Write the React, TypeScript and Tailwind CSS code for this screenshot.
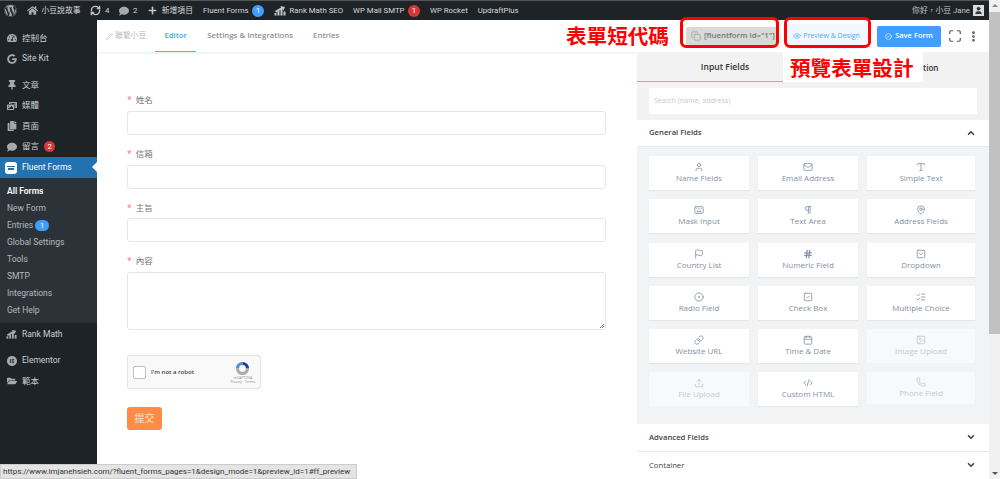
import { ReactNode } from "react";
import {
  Calendar,
  ChevronDown,
  ChevronUp,
  CircleCheck,
  CircleDot,
  CodeXml,
  Copy,
  Eye,
  Flag,
  Hash,
  Image,
  Keyboard,
  Link,
  ListChecks,
  Mail,
  MapPin,
  Maximize,
  MoreVertical,
  Pencil,
  Phone,
  Pilcrow,
  Plus,
  RefreshCw,
  SquareCheck,
  SquareChevronDown,
  Type,
  Upload,
  User,
} from "lucide-react";
import {
  FaComment,
  FaCopy,
  FaFolderOpen,
  FaGoogle,
  FaHome,
  FaPhotoVideo,
  FaTachometerAlt,
  FaThumbtack,
  FaWordpress,
} from "react-icons/fa";
import { SiElementor } from "react-icons/si";

const FONT = "font-['Open_Sans','Noto_Sans_CJK_TC',sans-serif]";
const WP_FONT = "font-['Roboto','Noto_Sans_CJK_TC',sans-serif]";

const RankMathIcon = ({ size = 12 }: { size?: number }) => (
  <svg width={size} height={size} viewBox="0 0 24 24" fill="currentColor">
    <rect x="1" y="16" width="4" height="5" />
    <rect x="7" y="12" width="4" height="9" />
    <rect x="13" y="8" width="4" height="13" />
    <path d="M2 12 L14 5 L13 2 L22 4 L19 11 L17 8 L4 15 Z" />
    <rect x="19" y="13" width="4" height="8" />
  </svg>
);

const TopItem = ({ icon, label, badge, badgeColor }: { icon?: ReactNode; label: string; badge?: string; badgeColor?: string }) => (
  <div className="flex items-center gap-[3.5px] whitespace-nowrap">
    {icon}
    <span>{label}</span>
    {badge && (
      <span className={`flex h-[12px] w-[12px] items-center justify-center rounded-full text-[8px] text-white ${badgeColor}`}>{badge}</span>
    )}
  </div>
);

const TopBar = () => (
  <div className={`flex h-[20px] shrink-0 items-center justify-between border-t border-[#555] bg-[#1d2327] pl-[4px] pr-[5px] text-[7.8px] text-[#d5d8da] ${WP_FONT}`}>
    <div className="flex items-center gap-[10px]">
      <FaWordpress size={13} className="text-[#a7aaad]" />
      <TopItem icon={<FaHome size={11} className="text-[#a7aaad]" />} label="小豆說故事" />
      <TopItem icon={<RefreshCw size={11} strokeWidth={3} className="text-[#c3c4c7]" />} label="4" />
      <TopItem icon={<FaComment size={10} className="text-[#a7aaad]" />} label="2" />
      <TopItem icon={<Plus size={11} strokeWidth={3.5} className="text-[#c3c4c7]" />} label="新增項目" />
      <TopItem label="Fluent Forms" badge="1" badgeColor="bg-[#409eff]" />
      <TopItem icon={<span className="text-[#c3c4c7]"><RankMathIcon /></span>} label="Rank Math SEO" />
      <TopItem label="WP Mail SMTP" badge="1" badgeColor="bg-[#d63638]" />
      <TopItem label="WP Rocket" />
      <TopItem label="UpdraftPlus" />
    </div>
    <div className="flex items-center gap-[3px] text-[#c3c4c7]">
      <span>你好，小豆 Jane</span>
      <div className="flex h-[11px] w-[11px] items-center justify-center bg-[#ddd]">
        <User size={9} className="fill-[#333] text-[#333]" />
      </div>
    </div>
  </div>
);

const MenuItem = ({ icon, label, badge }: { icon: ReactNode; label: string; badge?: string }) => (
  <div className="flex h-[20.5px] items-center gap-[5px] pl-[6px] text-[8.5px] text-[#c9ced2]">
    <span className="flex w-[11px] justify-center text-[#a7aaad]">{icon}</span>
    <span>{label}</span>
    {badge && <span className="flex h-[11px] w-[11px] items-center justify-center rounded-full bg-[#d63638] text-[7.5px] text-white">{badge}</span>}
  </div>
);

const SUB_ITEMS = ["New Form", "Entries", "Global Settings", "Tools", "SMTP", "Integrations", "Get Help"];

const Sidebar = () => (
  <div className={`flex w-[97px] shrink-0 flex-col bg-[#1d2327] pt-[8px] ${WP_FONT}`}>
    <MenuItem icon={<FaTachometerAlt size={10} />} label="控制台" />
    <MenuItem icon={<FaGoogle size={10} />} label="Site Kit" />
    <div className="h-[6px]" />
    <MenuItem icon={<FaThumbtack size={10} />} label="文章" />
    <MenuItem icon={<FaPhotoVideo size={10} />} label="媒體" />
    <MenuItem icon={<FaCopy size={10} />} label="頁面" />
    <MenuItem icon={<FaComment size={10} />} label="留言" badge="2" />
    <div className="relative flex h-[21px] items-center gap-[5px] bg-[#2271b1] pl-[5px] text-[8.5px] text-white">
      <span className="flex h-[12px] w-[12px] flex-col items-center justify-center gap-[1px] rounded-[3px] bg-white">
        <span className="h-[1.5px] w-[8px] bg-[#2271b1]" />
        <span className="h-[1.5px] w-[6px] bg-[#2271b1]" />
      </span>
      <span>Fluent Forms</span>
      <span className="absolute right-0 top-[5px] h-0 w-0 border-y-[5px] border-r-[5px] border-y-transparent border-r-white" />
    </div>
    <div className="flex h-[145px] flex-col bg-[#2c3338] pt-[5px] text-[8.5px] text-[#b4b9be]">
      <div className="flex h-[17px] items-center pl-[7px] font-semibold text-white">All Forms</div>
      {SUB_ITEMS.map((item) => (
        <div key={item} className="flex h-[17px] items-center gap-[2px] pl-[7px]">
          {item}
          {item === "Entries" && (
            <span className="flex h-[11px] w-[14px] items-center justify-center rounded-full bg-[#409eff] text-[7.5px] text-white">1</span>
          )}
        </div>
      ))}
    </div>
    <div className="h-[1px]" />
    <MenuItem icon={<RankMathIcon size={11} />} label="Rank Math" />
    <div className="h-[6px]" />
    <MenuItem icon={<SiElementor size={10} />} label="Elementor" />
    <MenuItem icon={<FaFolderOpen size={10} />} label="範本" />
  </div>
);

const Header = () => (
  <div className="relative z-10 flex h-[34px] shrink-0 items-center justify-between border-b-2 border-[#f3f4f5] bg-white pl-[9px] pr-[9px]">
    <div className="flex h-full items-center text-[7.8px] font-semibold text-[#8c9196]">
      <div className="flex items-center gap-[2px] pr-[9px] font-normal text-[#bbb]">
        <Pencil size={7} />
        <span>聯繫小豆</span>
      </div>
      <div className="flex h-full w-[41px] items-center justify-center border-b border-[#5aa9f5] text-[#4a9ff5]">Editor</div>
      <div className="pl-[11px] pr-[20px]">Settings &amp; Integrations</div>
      <div>Entries</div>
    </div>
    <div className="flex items-center">
      <div className="flex h-[18px] w-[91px] items-center gap-[3px] overflow-hidden rounded-[2px] bg-[#d9d9d9] pl-[5px] text-[7.8px] font-semibold text-[#777]">
        <Copy size={10} className="shrink-0 text-[#a5a5a5]" />
        <span className="whitespace-nowrap">[fluentform id="1"]</span>
      </div>
      <div className="ml-[9px] flex h-[25px] w-[81px] items-center justify-center gap-[2px] bg-[#f0f7ff] text-[7px] text-[#5aa9f5]">
        <Eye size={8} />
        <span>Preview &amp; Design</span>
      </div>
      <div className="ml-[10px] flex h-[21px] w-[64px] items-center justify-center gap-[3px] rounded-[2px] bg-[#409eff] text-[7.5px] font-semibold text-white">
        <CircleCheck size={7} />
        <span>Save Form</span>
      </div>
      <Maximize size={14} className="ml-[7px] text-[#555]" />
      <MoreVertical size={13} strokeWidth={3} className="ml-[5px] text-[#555]" />
    </div>

    {/* red notes drawn over the screenshot */}
    <span className="absolute left-[469px] top-[2px] text-[20.6px] font-bold leading-[28px] text-[#f00]">表單短代碼</span>
    <span className="absolute left-[583px] top-[-3px] h-[31px] w-[99px] rounded-[6px] border-[3px] border-[#f00]" />
    <span className="absolute left-[687px] top-[-3px] h-[31px] w-[87px] rounded-[6px] border-[3px] border-[#f00]" />
    <div className="absolute left-[686px] top-[32px] h-[30px] w-[140px] bg-white pl-[7px] pt-[2px] text-[20.6px] font-bold leading-[28px] text-[#f00]">預覽表單設計</div>
  </div>
);

const Field = ({ label, tall }: { label: string; tall?: boolean }) => (
  <div className="mb-[12.7px]">
    <div className="mb-[4px] flex h-[13px] items-center gap-[4px] text-[8.5px] text-[#777]">
      <span className="text-[#f56c6c]">*</span>
      <span>{label}</span>
    </div>
    <div className={`${tall ? "h-[58px]" : "h-[24px]"} relative rounded-[3px] border border-[#e4e6e8] bg-white`}>
      {tall && <span className="absolute bottom-[1px] right-[1px] h-[5px] w-[5px] bg-[linear-gradient(135deg,transparent_50%,#777_50%,#777_60%,transparent_60%,transparent_75%,#777_75%,#777_85%,transparent_85%)]" />}
    </div>
  </div>
);

const RecaptchaLogo = () => (
  <svg width="15" height="15" viewBox="0 0 24 24" fill="none" strokeWidth="5">
    <path d="M4 12 A8 8 0 0 1 12 4" stroke="#4a90e2" />
    <path d="M12 4 A8 8 0 0 1 20 12" stroke="#1c3aa9" />
    <path d="M20 12 A8 8 0 0 1 4 12" stroke="#ababab" />
  </svg>
);

const FormCanvas = () => (
  <div className="w-[540px] shrink-0 bg-white pl-[30px] pr-[31px] pt-[40px]">
    <Field label="姓名" />
    <Field label="信箱" />
    <Field label="主旨" />
    <Field label="內容" tall />
    <div className="mt-[25px] flex h-[34px] w-[134px] items-center rounded-[2px] border border-[#e4e4e4] bg-[#f9f9f9] pl-[5px] pr-[5px]">
      <span className="h-[13px] w-[13px] rounded-[2px] border border-[#c1c1c1] bg-white" />
      <span className="ml-[5px] text-[6px] font-semibold text-[#444]">I'm not a robot</span>
      <div className="ml-auto flex flex-col items-center text-[3.5px] leading-[4px] text-[#888]">
        <RecaptchaLogo />
        <span>reCAPTCHA</span>
        <span>Privacy · Terms</span>
      </div>
    </div>
    <div className="mt-[18px] flex h-[23px] w-[35px] items-center justify-center rounded-[3px] bg-[#ff8c42] text-[10px] text-[#ffe3d0]">提交</div>
  </div>
);

const FIELDS: { label: string; icon: ReactNode; off?: boolean; short?: boolean }[] = [
  { label: "Name Fields", icon: <User size={10} /> },
  { label: "Email Address", icon: <Mail size={10} /> },
  { label: "Simple Text", icon: <Type size={10} /> },
  { label: "Mask Input", icon: <Keyboard size={10} /> },
  { label: "Text Area", icon: <Pilcrow size={10} /> },
  { label: "Address Fields", icon: <MapPin size={10} /> },
  { label: "Country List", icon: <Flag size={10} /> },
  { label: "Numeric Field", icon: <Hash size={10} strokeWidth={3} /> },
  { label: "Dropdown", icon: <SquareChevronDown size={10} /> },
  { label: "Radio Field", icon: <CircleDot size={10} /> },
  { label: "Check Box", icon: <SquareCheck size={10} /> },
  { label: "Multiple Choice", icon: <ListChecks size={10} /> },
  { label: "Website URL", icon: <Link size={10} /> },
  { label: "Time & Date", icon: <Calendar size={10} /> },
  { label: "Image Upload", icon: <Image size={10} />, off: true },
  { label: "File Upload", icon: <Upload size={10} />, off: true },
  { label: "Custom HTML", icon: <CodeXml size={10} /> },
  { label: "Phone Field", icon: <Phone size={10} />, off: true, short: true },
];

const FieldCard = ({ label, icon, off, short }: { label: string; icon: ReactNode; off?: boolean; short?: boolean }) => (
  <div
    className={`flex flex-col items-center justify-center text-[8px] leading-[12px] ${short ? "h-[32px]" : "h-[34px]"} ${
      off ? "bg-[#f8f9fa] text-[#c5c9ce]" : "bg-white text-[#8491a5] shadow-[0_1px_1px_rgba(0,0,0,0.05)]"
    }`}
  >
    {icon}
    <span>{label}</span>
  </div>
);

const Accordion = ({ label, open, bold }: { label: string; open?: boolean; bold?: boolean }) => (
  <div className={`flex shrink-0 items-center justify-between border-b border-[#e8eaec] bg-white pl-[12px] pr-[13px] text-[7.7px] text-[#444] ${open ? "h-[27px]" : "h-[28px]"} ${bold ? "font-semibold" : ""}`}>
    <span>{label}</span>
    {open ? <ChevronUp size={10} strokeWidth={4} /> : <ChevronDown size={10} strokeWidth={4} />}
  </div>
);

const FieldsPanel = () => (
  <div className="flex min-w-0 flex-1 flex-col bg-[#f1f3f5]">
    <div className="flex h-[28px] shrink-0 bg-[#f2f2f2] text-[8.6px] font-semibold text-[#333]">
      <div className="flex w-[146px] items-center justify-center border-b-[1.5px] border-[#7cb9f5] pl-[30px]">Input Fields</div>
      <div className="flex flex-1 items-center pl-[140px] text-[8px]">tion</div>
    </div>
    <div className="shrink-0 bg-[#f2f2f2] px-[12px] pb-[6px] pt-[6px]">
      <div className="flex h-[26px] items-center bg-white pl-[5px] text-[7px] text-[#c5c9ce]">Search (name, address)</div>
    </div>
    <Accordion label="General Fields" open bold />
    <div className="grid shrink-0 grid-cols-[100px_100px_108px] gap-x-[9px] gap-y-[9.3px] px-[12px] pb-[17.5px] pt-[9px]">
      {FIELDS.map((field) => (
        <FieldCard key={field.label} {...field} />
      ))}
    </div>
    <Accordion label="Advanced Fields" bold />
    <Accordion label="Container" />
  </div>
);

const Scrollbar = () => (
  <div className="flex w-[11px] shrink-0 flex-col items-center bg-[#f1f1f1]">
    <span className="mt-[4px] h-0 w-0 border-x-[3px] border-b-[3px] border-x-transparent border-b-[#888]" />
    <div className="mt-[5px] h-[322px] w-full bg-[#c1c1c1]" />
    <span className="mt-[138px] h-0 w-0 border-x-[3px] border-t-[3px] border-x-transparent border-t-[#555]" />
  </div>
);

export default function App() {
  return (
    <div className={`relative flex h-[479px] w-[1000px] overflow-hidden bg-white ${FONT}`}>
      <div className="flex w-[989px] min-w-0 shrink-0 flex-col">
        <TopBar />
        <div className="flex min-h-0 flex-1">
          <Sidebar />
          <div className="flex min-w-0 flex-1 flex-col">
            <Header />
            <div className="flex min-h-0 flex-1">
              <FormCanvas />
              <FieldsPanel />
            </div>
          </div>
        </div>
      </div>
      <Scrollbar />
      <div className={`absolute bottom-0 left-0 flex h-[15px] w-[357px] items-center whitespace-nowrap border border-[#ccc] bg-[#e4e4e4] pl-[2px] text-[8px] text-[#333] ${WP_FONT}`}>
        https://www.imjanehsieh.com/?fluent_forms_pages=1&amp;design_mode=1&amp;preview_id=1#ff_preview
      </div>
    </div>
  );
}
